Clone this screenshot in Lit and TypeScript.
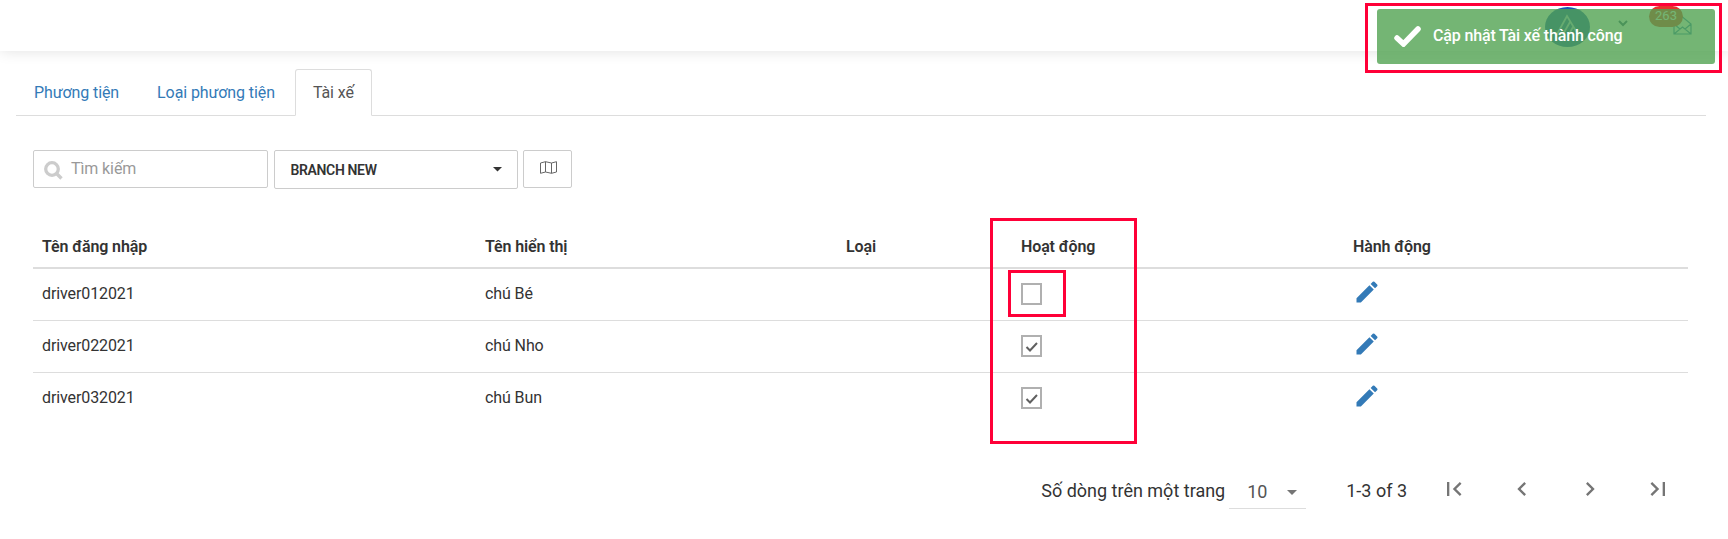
import { LitElement, html, css, svg } from "lit";
import { customElement, state } from "lit/decorators.js";

interface Driver { login: string; name: string; active: boolean; }

@customElement("app-root")
export class AppRoot extends LitElement {
  static styles = css`
    * { box-sizing: border-box; }
    :host { display: block; position: relative; height: 539px; overflow: hidden; background: #fff; color: #333; font: 400 16px/24px Roboto, "Noto Sans", sans-serif; letter-spacing: -.1px; }
    .topbar { height: 51px; display: flex; justify-content: flex-end; align-items: flex-start; background: #fff; box-shadow: 0 0 14px rgba(0,0,0,.12); clip-path: inset(0 0 -20px 0); }
    .avatar { width: 45px; height: 40px; margin: 7px 28px 0 0; border-radius: 50%; background: #1b55b3; display: block; }
    .chev { margin: 20px 23px 0 0; width: 10px; height: 7px; display: block; }
    .mail { width: 19px; height: 19px; margin: 16px 36px 0 22px; display: block; }
    .badge { position: absolute; z-index: 1; left: 1649px; top: 6px; width: 34px; height: 21px; border-radius: 11px; background: #e5352c; color: #fff; font-size: 13px; line-height: 19px; letter-spacing: 0; text-align: center; }
    .toast { position: absolute; z-index: 3; left: 1377px; top: 9px; width: 338px; height: 55px; border-radius: 3px; background: rgba(81,163,81,.8); color: #fff; display: flex; align-items: center; padding: 0 0 1px 17px; gap: 12px; font-weight: 500; letter-spacing: -.15px; }
    .toast svg { width: 27px; height: 21px; margin-top: 1px; }
    .mark { position: absolute; z-index: 4; border: 3px solid #ff0038; }
    .m1 { left: 1365px; top: 3px; width: 357px; height: 70px; }
    .m2 { left: 990px; top: 218px; width: 147px; height: 226px; }
    .m3 { left: 1008px; top: 270px; width: 58px; height: 47px; }
    .tabs { display: flex; margin: 18px 22px 0 16px; height: 47px; border-bottom: 1px solid #ddd; }
    .tab { height: 47px; border: 1px solid transparent; padding: 11px 17px; margin-right: 2px; color: #337ab7; white-space: nowrap; }
    .tab.on { color: #555; background: #fff; border-color: #ddd #ddd #fff; border-radius: 3px 3px 0 0; }
    .filters { display: flex; align-items: flex-start; padding: 34px 0 0 33px; height: 73px; }
    .box { border: 1px solid #ccc; border-radius: 2px; display: flex; align-items: center; height: 38px; }
    .search { width: 235px; margin-right: 6px; padding-left: 10px; color: #999; }
    .search svg { width: 19px; height: 19px; margin: 2px 8px 0 0; }
    .select { width: 244px; height: 39px; margin-right: 5px; padding: 0 15px 0 15.500px; justify-content: space-between; font-size: 14px; font-weight: 600; letter-spacing: -.36px; }
    .map { width: 49px; justify-content: center; padding: 0 0 3px 1px; }
    .table { margin: 36px 40px 0 33px; }
    .row { display: grid; grid-template-columns: 443px 361px 175px 332px 1fr; height: 52px; padding-left: 9px; border-bottom: 1px solid #ddd; align-items: start; }
    .row:last-child { border-bottom: 0; }
    .row span { margin-top: 13px; }
    .row.head { height: 44px; font-weight: 600; border-bottom: 2px solid #ddd; letter-spacing: -.12px; }
    .head span { margin-top: 10px; }
    .row .check { width: 21px; height: 22px; border: 2px solid #b0b0b0; display: block; margin-top: 14px; }
    .check svg, .edit { display: block; }
    .edit { margin-top: 8.500px; }
    .pager { display: flex; align-items: flex-start; justify-content: flex-end; height: 60px; margin: 50px 0 0; padding-right: 56px; font-size: 18px; line-height: 32px; letter-spacing: 0; }
    .size { width: 77px; height: 33px; margin: 1px 40px 0 4px; border-bottom: 1px solid #ddd; padding: 0 9px 0 18px; display: flex; align-items: center; justify-content: space-between; color: #555; }
    .nav { display: flex; margin-left: 33px; }
    .nav svg { width: 28px; height: 28px; margin-right: 40px; display: block; }
    .nav svg:last-child { margin-right: 0; }
  `;

  @state() private drivers: Driver[] = [
    { login: "driver012021", name: "chú Bé", active: false },
    { login: "driver022021", name: "chú Nho", active: true },
    { login: "driver032021", name: "chú Bun", active: true },
  ];

  private navIcon(d: string) {
    return html`<svg viewBox="0 0 24 24" fill="#757575">${svg`<path d=${d} />`}</svg>`;
  }

  render() {
    return html`
      <div class="topbar">
        <svg class="avatar" viewBox="0 0 45 40" fill="none" stroke="#b9cbe8" stroke-width="1.800"><path d="M11 29 22 9l12 20M17 29l8-14M23 29l5-9" /></svg>
        <svg class="chev" viewBox="0 0 10 7" fill="none" stroke="#357" stroke-width="2"><path d="m1 1 4 4 4-4" /></svg>
        <svg class="mail" viewBox="0 0 19 19" fill="none" stroke="#337ab7" stroke-width="1.200"><path d="M1 8 9.500 1 18 8v10H1zM1 8l6 5M18 8l-6 5M1 18l8.500-7 8.500 7" /></svg>
      </div>
      <div class="badge">263</div>
      <div class="tabs">
        <div class="tab">Phương tiện</div>
        <div class="tab">Loại phương tiện</div>
        <div class="tab on">Tài xế</div>
      </div>
      <div class="filters">
        <div class="box search">
          <svg viewBox="0 0 19 19" fill="none" stroke="#ccc" stroke-width="3.300"><circle cx="8" cy="8" r="6.300" /><path d="m12.500 12.500 5 5" /></svg>
          Tìm kiếm
        </div>
        <div class="box select">BRANCH NEW<svg width="9" height="5" viewBox="0 0 9 5" fill="#333"><path d="M0 0h9L4.500 4.500z" /></svg></div>
        <div class="box map"><svg width="17" height="13" viewBox="0 0 17 13" fill="none" stroke="#666"><path d="M.5 2 5.500.7l6 1.300 5-1.300v10.300l-5 1.300-6-1.300-5 1.300zM5.500.7V11M11.500 2v10.300" /></svg></div>
      </div>
      <div class="table">
        <div class="row head"><span>Tên đăng nhập</span><span>Tên hiển thị</span><span>Loại</span><span>Hoạt động</span><span>Hành động</span></div>
        ${this.drivers.map((d) => html`
          <div class="row">
            <span>${d.login}</span><span>${d.name}</span><span></span>
            <span class="check">${d.active ? html`<svg width="17" height="18" viewBox="0 0 17 18" fill="none" stroke="#606060" stroke-width="2"><path d="m3.500 10 3.500 3.500 7-7.500" /></svg>` : ""}</span>
            <svg class="edit" width="28" height="28" viewBox="0 0 24 24" fill="#337ab7"><path d="M3 17.250V21h3.750L17.810 9.940l-3.750-3.750zM20.710 7.040a1 1 0 0 0 0-1.410l-2.340-2.340a1 1 0 0 0-1.410 0l-1.830 1.830 3.750 3.750z" /></svg>
          </div>`)}
      </div>
      <div class="pager">
        <span>Số dòng trên một trang</span>
        <div class="size">10<svg width="10" height="5" viewBox="0 0 10 5" fill="#757575"><path d="M0 0h10L5 5z" /></svg></div>
        <span>1-3 of 3</span>
        <div class="nav">
          ${this.navIcon("M18.410 16.590 13.820 12l4.590-4.590L17 6l-6 6 6 6zM6 6h2v12H6z")}
          ${this.navIcon("M15.410 7.410 14 6l-6 6 6 6 1.410-1.410L10.830 12z")}
          ${this.navIcon("M10 6 8.590 7.410 13.170 12l-4.580 4.590L10 18l6-6z")}
          ${this.navIcon("M5.590 7.410 10.180 12l-4.590 4.590L7 18l6-6-6-6zM16 6h2v12h-2z")}
        </div>
      </div>
      <div class="toast"><svg viewBox="0 0 27 21" fill="none" stroke="#fff" stroke-width="5.500" stroke-linecap="round"><path d="m3 12 6.500 6L24 3" /></svg>Cập nhật Tài xế thành công</div>
      <div class="mark m1"></div><div class="mark m2"></div><div class="mark m3"></div>
    `;
  }
}
